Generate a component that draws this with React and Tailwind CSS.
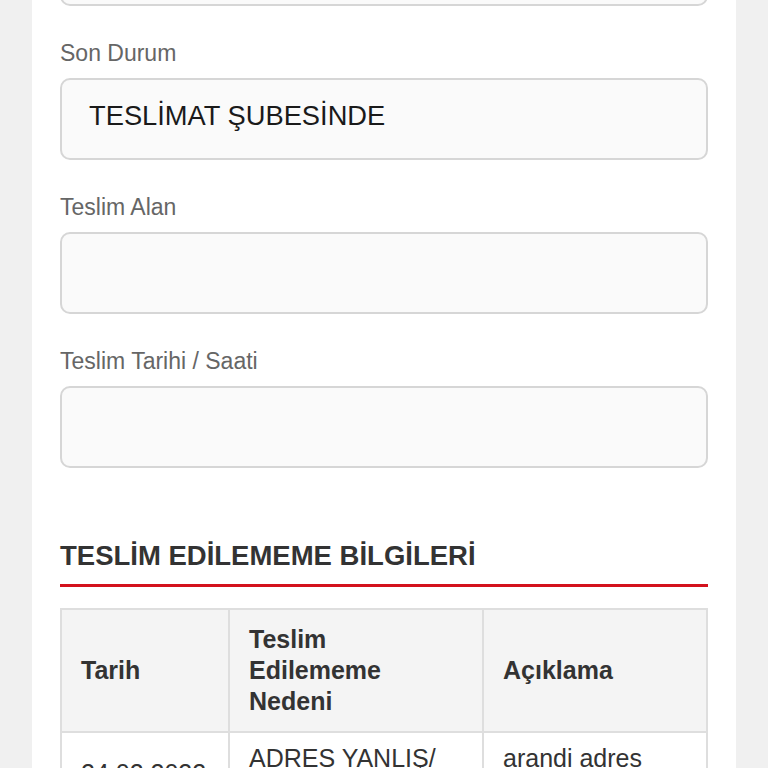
import React from "react";

function Field({ label, value, first }) {
  return (
    <div className="flex flex-col">
      {label && (
        <div className="text-[23px] leading-none text-[#666] mt-[36px] mb-[13px]">{label}</div>
      )}
      <div
        className={
          "h-[82px] rounded-[10px] border-2 border-[#d6d6d6] bg-[#fafafa] flex items-center pl-[27px] text-[27.3px] text-[#1a1a1a] pb-[5px]" +
          (first ? " -mt-[76px]" : "")
        }
      >
        {value}
      </div>
    </div>
  );
}

export default function App() {
  return (
    <div
      className="min-h-[768px] bg-[#f0f0f0] flex justify-start overflow-hidden"
      style={{ fontFamily: '"Liberation Sans", Arial, sans-serif' }}
    >
      <div className="ml-[32px] w-[704px] bg-white px-[28px] pb-[40px] h-[768px] overflow-hidden">
        <Field first value="" />
        <Field label="Son Durum" value="TESLİMAT ŞUBESİNDE" />
        <Field label="Teslim Alan" value="" />
        <Field label="Teslim Tarihi / Saati" value="" />

        <div className="mt-[74px] text-[27.5px] leading-none font-bold text-[#333] pb-[14px] border-b-[3px] border-[#d3121d]">
          TESLİM EDİLEMEME BİLGİLERİ
        </div>

        <table className="mt-[21px] w-full table-fixed border-collapse border-2 border-[#dedede] text-[25px] leading-[31px] text-[#333]">
          <colgroup>
            <col className="w-[168px]" />
            <col className="w-[254px]" />
            <col />
          </colgroup>
          <thead>
            <tr className="bg-[#f4f4f4]">
              <th className="border-2 border-[#dedede] text-left font-bold align-middle px-[19px] py-[14px]">Tarih</th>
              <th className="border-2 border-[#dedede] text-left font-bold align-middle px-[19px] py-[14px]">
                Teslim Edilememe Nedeni
              </th>
              <th className="border-2 border-[#dedede] text-left font-bold align-middle px-[19px] py-[14px]">Açıklama</th>
            </tr>
          </thead>
          <tbody>
            <tr>
              <td className="border-2 border-[#dedede] align-middle px-[19px] pt-[10px] pb-[14px]">24.02.2022</td>
              <td className="border-2 border-[#dedede] align-top px-[19px] pt-[10px] pb-[14px]">ADRES YANLIŞ/ EKSİK</td>
              <td className="border-2 border-[#dedede] align-top px-[19px] pt-[10px] pb-[14px]">arandi adres bulunamadi</td>
            </tr>
          </tbody>
        </table>
      </div>
    </div>
  );
}
